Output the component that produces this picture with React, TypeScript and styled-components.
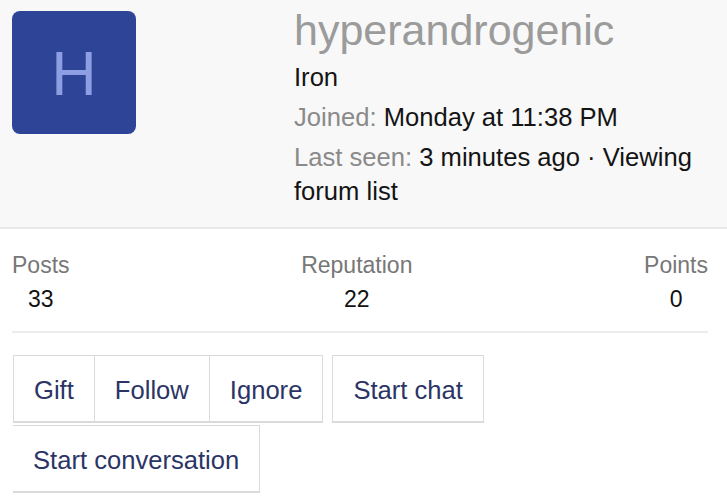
import React from 'react';
import styled, { createGlobalStyle } from 'styled-components';

const GlobalStyle = createGlobalStyle`
  html, body {
    margin: 0;
    padding: 0;
    background: #fff;
  }
  body {
    font-family: "Liberation Sans", Arial, Helvetica, sans-serif;
    color: #141414;
  }
`;

const StyledHeader = styled.header`
  display: flex;
  gap: 158px;
  padding: 11px 17px 19px 12px;
  background: #f8f8f8;
  border-bottom: 2px solid #e9e9e9;
`;

const StyledAvatar = styled.div`
  flex: 0 0 124px;
  height: 123px;
  border-radius: 8px;
  background: #2e4497;
  color: #8d9ee2;
  font-size: 63px;
  display: flex;
  align-items: center;
  justify-content: center;
`;

const StyledInfo = styled.div`
  flex: 1;
  margin-top: -5px;
`;

const StyledName = styled.h1`
  margin: 0;
  font-size: 43px;
  font-weight: normal;
  line-height: 48px;
  color: #9b9b9b;
`;

const StyledLine = styled.p`
  margin: 6px 0 0;
  font-size: 25.6px;
  line-height: 34px;
`;

const StyledMuted = styled.span`
  color: #8a8a8a;
`;

const StyledStats = styled.dl`
  display: flex;
  justify-content: space-between;
  margin: 0 19px 0 12px;
  padding: 19px 0 15px;
  border-bottom: 2px solid #ececec;
`;

const StyledStat = styled.div`
  text-align: center;
  font-size: 23px;
  line-height: 34px;
`;

const StyledStatLabel = styled.dt`
  color: #777;
`;

const StyledStatValue = styled.dd`
  margin: 0;
  color: #111;
`;

const StyledActions = styled.div`
  display: flex;
  flex-wrap: wrap;
  align-items: flex-start;
  column-gap: 9px;
  row-gap: 2px;
  padding: 22px 13px 0;
`;

const StyledGroup = styled.div`
  display: flex;
`;

const StyledButton = styled.button<{ $joined?: boolean }>`
  font-family: inherit;
  font-size: 25.6px;
  line-height: 35px;
  color: #2b3565;
  background: #fff;
  padding: 17px 20px 13px;
  border: 1px solid #dadada;
  border-bottom-width: 2px;
  border-radius: 0;
  cursor: pointer;

  ${({ $joined }) => $joined && `
    & + & {
      border-left: none;
    }
  `}
`;

const stats = [
  { label: 'Posts', value: '33' },
  { label: 'Reputation', value: '22' },
  { label: 'Points', value: '0' },
];

const App: React.FC = () => (
  <>
    <GlobalStyle />
    <StyledHeader>
      <StyledAvatar>H</StyledAvatar>
      <StyledInfo>
        <StyledName>hyperandrogenic</StyledName>
        <StyledLine>Iron</StyledLine>
        <StyledLine>
          <StyledMuted>Joined:</StyledMuted> Monday at 11:38 PM
        </StyledLine>
        <StyledLine>
          <StyledMuted>Last seen:</StyledMuted> 3 minutes ago · Viewing forum list
        </StyledLine>
      </StyledInfo>
    </StyledHeader>
    <StyledStats>
      {stats.map((s) => (
        <StyledStat key={s.label}>
          <StyledStatLabel>{s.label}</StyledStatLabel>
          <StyledStatValue>{s.value}</StyledStatValue>
        </StyledStat>
      ))}
    </StyledStats>
    <StyledActions>
      <StyledGroup>
        <StyledButton $joined>Gift</StyledButton>
        <StyledButton $joined>Follow</StyledButton>
        <StyledButton $joined>Ignore</StyledButton>
      </StyledGroup>
      <StyledButton>Start chat</StyledButton>
      <StyledButton>Start conversation</StyledButton>
    </StyledActions>
  </>
);

export default App;
